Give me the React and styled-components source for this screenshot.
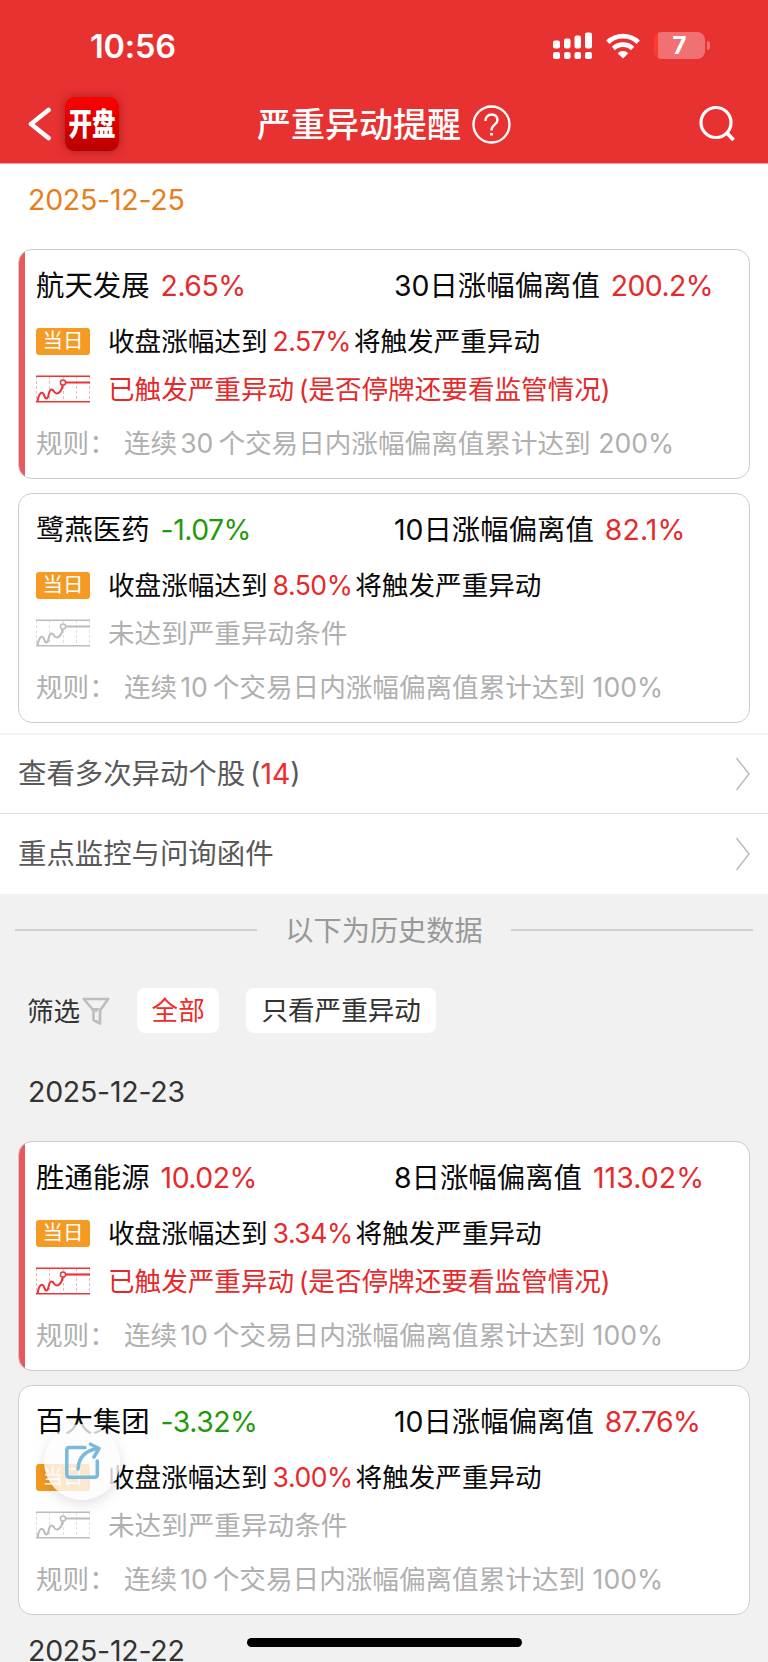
import styled, { createGlobalStyle } from "styled-components"

const red = '#e62a2c'
const green = '#1f9a0c'
const gray = { light: '#b0b0b0', medium: '#999999', dark: '#595959' }

const GlobalStyle = createGlobalStyle`
    * { box-sizing: border-box; }
    html, body { height: 1662px; overflow: hidden; }
    body {
        margin: 0;
        background: #f1f1f1;
        font-family: Inter, "Noto Sans CJK SC", sans-serif;
        text-autospace: no-autospace;
    }
    svg { display: block; flex: none; }
`

const StylePage = styled.div`
    position: relative;
    height: 1662px;
    overflow: hidden;
    white-space: nowrap;
`
const StyleHeader = styled.header`
    height: 164px;
    border-bottom: 1px solid #f3a0a0;
    background: #e83131;
    color: #fff;
`
const StyleStatusBar = styled.div`
    display: flex;
    align-items: center;
    height: 91px;
    padding: 0 58px 0 90px;
`
const StyleTime = styled.div`
    flex: 1;
    font-size: 32.5px;
    font-weight: 600;
    letter-spacing: -0.2px;
    line-height: 40px;
    padding-top: 2px;
`
const StyleStatusIcons = styled.div`
    display: flex;
    gap: 14px;
    align-items: center;
`
const StyleBattery = styled.div`
    display: flex;
    align-items: center;
    gap: 2px;
`
const StyleBatteryBody = styled.div`
    width: 51px;
    height: 27px;
    border-radius: 8px;
    background: linear-gradient(90deg, #ff3b30 4px, #f17072 4px);
    font-size: 24px;
    font-weight: 700;
    line-height: 27px;
    text-align: center;
`
const StyleBatteryCap = styled.div`
    width: 3px;
    height: 9px;
    border-radius: 0 4px 4px 0;
    background: #f17072;
`
const StyleNavBar = styled.div`
    display: grid;
    grid-template-columns: 1fr auto 1fr;
    align-items: center;
    height: 66px;
    padding: 0 33px 0 28px;
`
const StyleNavLeft = styled.div`
    display: flex;
    align-items: center;
    gap: 12px;
`
const StyleLogo = styled.div`
    display: flex;
    align-items: center;
    justify-content: center;
    width: 54px;
    height: 54px;
    border-radius: 9px;
    background: linear-gradient(#ff0000, #b80000);
    box-shadow: 0 0 9px rgba(90, 20, 20, 0.5);
    font-size: 31px;
    font-weight: 900;
    line-height: 54px;
    span { transform: scaleX(0.76); }
`
const StyleTitle = styled.h1`
    display: flex;
    align-items: center;
    gap: 11px;
    margin: 0 0 0 5px;
    font-size: 34px;
    font-weight: 500;
    line-height: 50px;
    span { padding-top: 2px; }
`
const StyleNavRight = styled.div`
    display: flex;
    justify-content: flex-end;
`
const StyleToday = styled.section`
    height: 569px;
    padding: 0 18px;
    background: #fff;
`
const StyleDate = styled.div`
    height: 85px;
    padding: 16px 0 0 10px;
    color: ${({ $color }) => $color || '#333'};
    font-size: 28.5px;
    letter-spacing: -0.25px;
    line-height: 40px;
`
const StyleCards = styled.div`
    display: flex;
    flex-direction: column;
    gap: 14px;
`
const StyleCard = styled.article`
    height: 230px;
    padding: 8px 0 0 17px;
    overflow: hidden;
    border: 1px solid #cbcbcb;
    border-radius: 14px;
    background: ${({ $marked }) => $marked ? 'linear-gradient(90deg, #ea585b 6px, #fff 6px)' : '#fff'};
`
const StyleHeadRow = styled.div`
    display: grid;
    grid-template-columns: 358px 1fr;
    height: 55px;
    font-size: 28.4px;
    line-height: 55px;
    color: #0a0a0a;
`
const StyleValue = styled.span`
    margin-left: ${({ $gap }) => $gap || 11}px;
    color: ${({ $color }) => $color};
    letter-spacing: ${({ $tracking }) => $tracking || 0}px;
`
const StyleRow = styled.div`
    display: flex;
    align-items: center;
    gap: 18px;
    height: ${({ $height }) => $height}px;
    font-size: 26.6px;
    color: ${({ $color }) => $color};
    word-spacing: -3px;
`
const StyleRowText = styled.div`
    padding-bottom: 4px;
`
const StyleNumber = styled.span`
    margin: ${({ $margin }) => $margin};
    color: ${({ $color }) => $color || 'inherit'};
    letter-spacing: ${({ $tracking }) => $tracking || 0}px;
`
const StyleBadge = styled.span`
    width: 54px;
    height: 27px;
    border-radius: 3px;
    background: #f59a23;
    color: #fff;
    font-size: 20.5px;
    line-height: 26px;
    text-align: center;
`
const StyleRule = styled.div`
    display: flex;
    align-items: center;
    height: 69px;
    padding-bottom: 2px;
    font-size: 26.6px;
    color: ${gray['light']};
`
const StyleRuleLabel = styled.span`
    width: 88px;
`
const StyleLink = styled.a`
    display: flex;
    align-items: center;
    justify-content: space-between;
    height: ${({ $height }) => $height}px;
    padding: 0 18px 1px 18px;
    border-top: ${({ $border }) => $border};
    background: #fff;
    color: ${gray['dark']};
    font-size: 28.4px;
    word-spacing: -3px;
`
const StyleLinkText = styled.span`
    padding-bottom: 4px;
`
const StyleDivider = styled.div`
    display: flex;
    align-items: center;
    justify-content: space-between;
    height: 72px;
    padding: 0 15px;
    color: ${gray['medium']};
    font-size: 28.2px;
    span { padding-bottom: 4px; }
    &::before, &::after {
        content: "";
        width: 242px;
        height: 2px;
        background: #d2d2d2;
    }
`
const StyleFilter = styled.div`
    display: flex;
    align-items: center;
    height: 90px;
    padding: 0 27px 1px;
    font-size: 26.6px;
    color: #333;
    svg { margin-left: 2px; }
`
const StyleFilterLabel = styled.span`
    padding-bottom: 2px;
`
const StyleChip = styled.button`
    width: ${({ $width }) => $width}px;
    height: 45px;
    margin-left: 27px;
    padding: 0;
    border: 0;
    border-radius: 8px;
    background: #fff;
    color: ${({ $active }) => $active ? '#f02b2b' : '#333'};
    font: inherit;
    line-height: 45px;
`
const StyleHistory = styled.section`
    padding: 0 18px;
`
const StyleShare = styled.button`
    position: absolute;
    left: 44px;
    top: 1424px;
    display: flex;
    align-items: center;
    justify-content: center;
    width: 76px;
    height: 76px;
    padding: 0;
    border: 0;
    border-radius: 50%;
    background: rgba(252, 252, 252, 0.79);
    box-shadow: 0 4px 14px rgba(0, 0, 0, 0.12);
`
const StyleHomeBar = styled.div`
    position: absolute;
    left: 247px;
    top: 1638px;
    width: 275px;
    height: 9px;
    border-radius: 5px;
    background: #000;
`

const SignalIcon = () => {
    return <svg width="39" height="28" viewBox="0 0 39 28" fill="#fff">
        <rect x="0" y="8.500" width="7" height="8" rx="2" />
        <rect x="11" y="6.500" width="6.500" height="10" rx="2" />
        <rect x="21.500" y="3.500" width="6.500" height="13" rx="2" />
        <rect x="32" y="0.500" width="7" height="16" rx="2" />
        <rect x="0" y="20" width="7" height="7" rx="2" />
        <rect x="11" y="20" width="6.500" height="7" rx="2" />
        <rect x="21.500" y="20" width="6.500" height="7" rx="2" />
        <rect x="32" y="20" width="7" height="7" rx="2" />
    </svg>
}

const WifiIcon = () => {
    return <svg width="34" height="26" viewBox="0 0 34 26" fill="none" stroke="#fff" strokeWidth="4.800">
        <path d="M1.800 9.200A22 22 0 0 1 32.200 9.200" />
        <path d="M7.400 15.400A14 14 0 0 1 26.600 15.400" />
        <path d="M17 25.500L11.600 20.200A7.800 7.800 0 0 1 22.400 20.200Z" fill="#fff" stroke="none" />
    </svg>
}

const TrendIcon = ({ color, light }) => {
    return <svg width="54" height="28" viewBox="0 0 54 28" fill="none" stroke={color}>
        <path d="M0.500 1V27M13.500 1V27M27.500 1V27M40.500 1V27M53.500 1V27" stroke={light} strokeDasharray="3 2" />
        <path d="M0 1.200H54M0 26.800H54" strokeWidth="1.400" />
        <path d="M1.500 26.500C2.500 20.500 4 17.800 6 17.800C8.500 17.800 8 23.500 10.500 23.500C13.300 23.500 12 14.500 15.500 14.500C18 14.500 18 18.500 20.500 18.500C24 18.500 26 14 26.800 10" strokeWidth="2.100" />
        <path d="M29.500 7.500H54" strokeWidth="2.200" />
        <circle cx="27" cy="7.500" r="2.600" fill="#fff" strokeWidth="1.500" />
    </svg>
}

const Chevron = () => {
    return <svg width="14" height="34" viewBox="0 0 14 34" fill="none" stroke="#b8b8b8" strokeWidth="1.400">
        <path d="M0.500 1L13 17L0.500 33" />
    </svg>
}

const StockCard = ({ name, change, days, deviation, limit, total, marked }) => {
    return <StyleCard $marked={marked}>
        <StyleHeadRow>
            <div>{name}<StyleValue $color={change.startsWith('-') ? green : red} $tracking={-0.5}>{change}</StyleValue></div>
            <div>{days}日涨幅偏离值<StyleValue $color={red} $tracking={deviation.includes('1') ? 0.1 : -0.6}>{deviation}</StyleValue></div>
        </StyleHeadRow>
        <StyleRow $height={57} $color="#0a0a0a">
            <StyleBadge>当日</StyleBadge>
            <StyleRowText>收盘涨幅达到<StyleNumber $margin="0 3px 0 5px" $tracking={-0.5} $color={red}>{limit}</StyleNumber>将触发严重异动</StyleRowText>
        </StyleRow>
        <StyleRow $height={38} $color={marked ? red : gray['light']}>
            <TrendIcon color={marked ? '#e83538' : '#bcbcbc'} light={marked ? '#f4b5b7' : '#dedede'} />
            <StyleRowText>{marked ? '已触发严重异动 (是否停牌还要看监管情况)' : '未达到严重异动条件'}</StyleRowText>
        </StyleRow>
        <StyleRule>
            <StyleRuleLabel>规则：</StyleRuleLabel>
            <div>连续<StyleNumber $margin="0 5px 0 3px">{days === '8' ? '10' : days}</StyleNumber>个交易日内涨幅偏离值累计达到 {total}</div>
        </StyleRule>
    </StyleCard>
}

const App = () => {
    return <StylePage>
        <GlobalStyle />
        <StyleHeader>
            <StyleStatusBar>
                <StyleTime>10:56</StyleTime>
                <StyleStatusIcons>
                    <SignalIcon />
                    <WifiIcon />
                    <StyleBattery>
                        <StyleBatteryBody>7</StyleBatteryBody>
                        <StyleBatteryCap />
                    </StyleBattery>
                </StyleStatusIcons>
            </StyleStatusBar>
            <StyleNavBar>
                <StyleNavLeft>
                    <svg width="25" height="34" viewBox="0 0 25 34" fill="none" stroke="#fff" strokeWidth="4.600" strokeLinecap="round" strokeLinejoin="round">
                        <path d="M20.500 3L3 17L20.500 31" />
                    </svg>
                    <StyleLogo><span>开盘</span></StyleLogo>
                </StyleNavLeft>
                <StyleTitle>
                    <span>严重异动提醒</span>
                    <svg width="39" height="39" viewBox="0 0 39 39" fill="none" stroke="#fff" strokeWidth="2.400">
                        <circle cx="19.500" cy="19.500" r="18" />
                        <path d="M13.500 16C13.500 7.500 25.500 7.500 25.500 15C25.500 19.500 19.500 19.500 19.500 25.500" />
                        <path d="M19.500 28V30.500" strokeWidth="2.800" />
                    </svg>
                </StyleTitle>
                <StyleNavRight>
                    <svg width="37" height="38" viewBox="0 0 37 38" fill="none" stroke="#fff" strokeWidth="3.200">
                        <circle cx="18" cy="17.500" r="15" />
                        <path d="M28 27L35.500 35" strokeWidth="3.800" />
                    </svg>
                </StyleNavRight>
            </StyleNavBar>
        </StyleHeader>
        <StyleToday>
            <StyleDate $color="#e87e1a">2025-12-25</StyleDate>
            <StyleCards>
                <StockCard marked name="航天发展" change="2.65%" days="30" deviation="200.2%" limit="2.57%" total="200%" />
                <StockCard name="鹭燕医药" change="-1.07%" days="10" deviation="82.1%" limit="8.50%" total="100%" />
            </StyleCards>
        </StyleToday>
        <StyleLink $height={80} $border="2px solid #f3f3fa">
            <StyleLinkText>查看多次异动个股 (<StyleValue $gap="0" $color="#f02b2b">14</StyleValue>)</StyleLinkText>
            <Chevron />
        </StyleLink>
        <StyleLink $height={81} $border="1px solid #dedede">
            <StyleLinkText>重点监控与问询函件</StyleLinkText>
            <Chevron />
        </StyleLink>
        <StyleDivider><span>以下为历史数据</span></StyleDivider>
        <StyleFilter>
            <StyleFilterLabel>筛选</StyleFilterLabel>
            <svg width="28" height="28" viewBox="0 0 28 28" fill="none" stroke="#bdbdbd" strokeWidth="2.600" strokeLinejoin="round">
                <path d="M1.800 2H26.200L18 13.500V26.500L11.500 23V13.500Z" />
                <path d="M11.500 11.500H17L14.200 15Z" fill="#bdbdbd" strokeWidth="1" />
            </svg>
            <StyleChip $active $width={82}>全部</StyleChip>
            <StyleChip $width={190}>只看严重异动</StyleChip>
        </StyleFilter>
        <StyleHistory>
            <StyleDate>2025-12-23</StyleDate>
            <StyleCards>
                <StockCard marked name="胜通能源" change="10.02%" days="8" deviation="113.02%" limit="3.34%" total="100%" />
                <StockCard name="百大集团" change="-3.32%" days="10" deviation="87.76%" limit="3.00%" total="100%" />
            </StyleCards>
            <StyleDate>2025-12-22</StyleDate>
        </StyleHistory>
        <StyleShare>
            <svg width="40" height="40" viewBox="0 0 40 40" fill="none" stroke="#7bb9da" strokeWidth="3.500" strokeLinecap="round" strokeLinejoin="round">
                <path d="M23 5.500H7.500Q4.800 5.500 4.800 8.200V32.600Q4.800 35.300 7.500 35.300H32.600Q35.300 35.300 35.300 32.600V19" />
                <path d="M16 27C16.500 17 21 9 35.500 6.500" />
                <path d="M28.500 2.200L37 6.500L32 15" />
            </svg>
        </StyleShare>
        <StyleHomeBar />
    </StylePage>
}
export default App
